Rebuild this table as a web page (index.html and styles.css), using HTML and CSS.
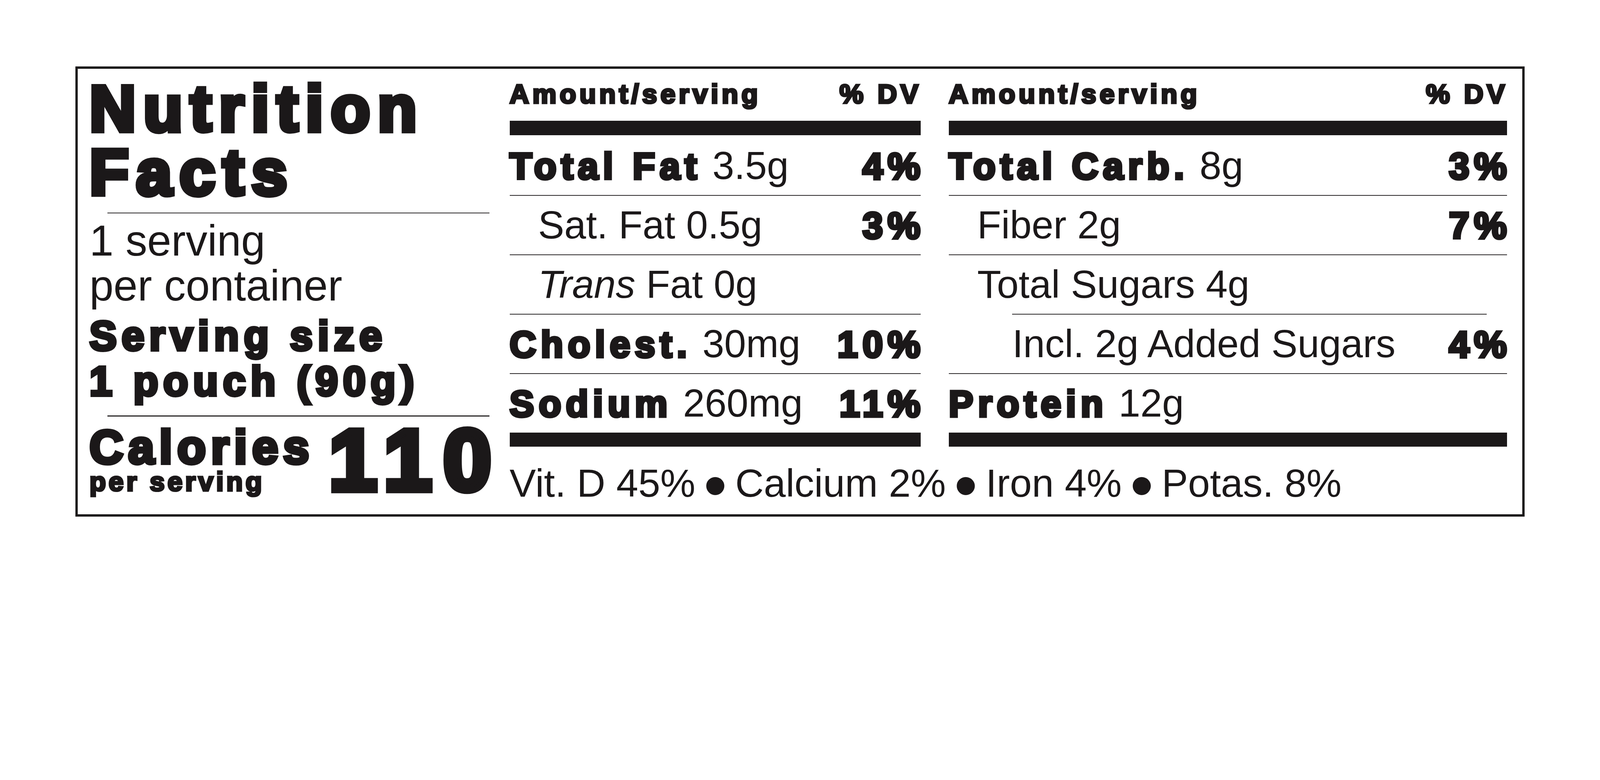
FILE: index.html
```html
<!DOCTYPE html>
<html lang="en">
<head>
<meta charset="utf-8">
<title>Nutrition Facts</title>
<link rel="stylesheet" href="styles.css">
</head>
<body>
<div class="label">
  <section class="left">
    <h1 class="title hv">Nutrition<br>Facts</h1>
    <div class="rule rule-top"></div>
    <p class="servings">1 serving<br>per container</p>
    <p class="size hv">Serving size<br>1 pouch (90g)</p>
    <div class="rule rule-bottom"></div>
    <div class="cal">
      <div class="cal-text">
        <div class="cal-word hv">Calories</div>
        <div class="cal-per hv">per serving</div>
      </div>
      <div class="cal-num hv">110</div>
    </div>
  </section>
  <section class="main">
    <div class="cols">
      <div class="col col-mid">
        <div class="head"><span class="hv">Amount/serving</span><span class="hv head-dv">% DV</span></div>
        <div class="bar bar-top"></div>
        <div class="row"><span><b class="hv">Total Fat</b> 3.5g</span><span class="hv pct">4%</span></div>
        <div class="sep"></div>
        <div class="row ind1"><span>Sat. Fat 0.5g</span><span class="hv pct">3%</span></div>
        <div class="sep"></div>
        <div class="row ind1"><span><i class="it">Trans</i> Fat 0g</span></div>
        <div class="sep"></div>
        <div class="row"><span><b class="hv">Cholest.</b> 30mg</span><span class="hv pct">10%</span></div>
        <div class="sep"></div>
        <div class="row"><span><b class="hv">Sodium</b> 260mg</span><span class="hv pct">11%</span></div>
        <div class="bar"></div>
      </div>
      <div class="col col-right">
        <div class="head"><span class="hv">Amount/serving</span><span class="hv head-dv">% DV</span></div>
        <div class="bar bar-top"></div>
        <div class="row"><span><b class="hv">Total Carb.</b> 8g</span><span class="hv pct">3%</span></div>
        <div class="sep"></div>
        <div class="row ind1"><span>Fiber 2g</span><span class="hv pct">7%</span></div>
        <div class="sep"></div>
        <div class="row ind1"><span>Total Sugars 4g</span></div>
        <div class="sep sep-short"></div>
        <div class="row ind2"><span>Incl. 2g Added Sugars</span><span class="hv pct">4%</span></div>
        <div class="sep"></div>
        <div class="row"><span><b class="hv">Protein</b> 12g</span></div>
        <div class="bar"></div>
      </div>
    </div>
    <p class="footer">Vit. D 45% <span class="dot">•</span> Calcium 2% <span class="dot">•</span> Iron 4% <span class="dot">•</span> Potas. 8%</p>
  </section>
</div>
</body>
</html>
```
FILE: styles.css
```css
:root {
  /* one reference pixel of the 5392px-wide artwork */
  --u: calc(100vw / 5392);
  --ink: #1b1819;
  --rule: #2b2829;
}

* {
  box-sizing: border-box;
}

html,
body {
  margin: 0;
  padding: 0;
  background: #ffffff;
  overflow: hidden;
}

body {
  font-family: "Liberation Sans", Arial, sans-serif;
  color: var(--ink);
  padding-top: calc(224 * var(--u));
}

.label {
  width: calc(4885 * var(--u));
  height: calc(1516 * var(--u));
  margin: 0 auto;
  border: calc(8 * var(--u)) solid var(--ink);
  display: flex;
  padding: 0 calc(52 * var(--u)) 0 calc(40 * var(--u));
}

.left {
  width: calc(1348 * var(--u));
  flex: none;
}

.main {
  flex: 1;
  margin-left: calc(68 * var(--u));
}

.hv {
  font-weight: 700;
  -webkit-text-stroke: 0.075em var(--ink);
  letter-spacing: 0.12em;
}

.it {
  font-style: italic;
}

/* left column */
.title {
  margin: 0;
  padding-top: calc(27 * var(--u));
  font-size: calc(217 * var(--u));
  line-height: calc(215 * var(--u));
  letter-spacing: 0.115em;
}

.rule {
  height: calc(3 * var(--u));
  background: var(--rule);
  margin-left: calc(61 * var(--u));
}

.rule-top {
  margin-top: calc(27 * var(--u));
}

.servings {
  margin: calc(17 * var(--u)) 0 0;
  font-size: calc(146 * var(--u));
  line-height: calc(152 * var(--u));
}

.size {
  margin: calc(16 * var(--u)) 0 0;
  font-size: calc(138 * var(--u));
  line-height: calc(153 * var(--u));
  letter-spacing: 0.119em;
}

.rule-bottom {
  margin-top: calc(38 * var(--u));
}

.cal {
  display: flex;
  justify-content: space-between;
  align-items: flex-start;
  margin-top: calc(30 * var(--u));
}

.cal-word {
  font-size: calc(158 * var(--u));
  line-height: calc(150 * var(--u));
  letter-spacing: 0.106em;
}

.cal-per {
  font-size: calc(91 * var(--u));
  line-height: calc(80 * var(--u));
  letter-spacing: 0.1em;
}

.cal-num {
  font-size: calc(291 * var(--u));
  line-height: calc(236 * var(--u));
  letter-spacing: 0.133em;
  margin-right: calc(-45 * var(--u));
}

/* nutrient columns */
.cols {
  display: flex;
  gap: calc(95 * var(--u));
}

.col-mid {
  width: calc(1385 * var(--u));
  flex: none;
}

.col-right {
  flex: 1;
}

.head {
  display: flex;
  justify-content: space-between;
  font-size: calc(91 * var(--u));
  line-height: calc(100 * var(--u));
  padding-top: calc(35 * var(--u));
}

.head .hv {
  letter-spacing: 0.122em;
}

.head-dv {
  margin-right: -0.04em;
}

.bar {
  height: calc(48 * var(--u));
  background: var(--ink);
}

.bar-top {
  margin-top: calc(40 * var(--u));
  margin-bottom: calc(5 * var(--u));
}

.row {
  display: flex;
  justify-content: space-between;
  align-items: baseline;
  height: calc(197 * var(--u));
  padding-top: calc(29 * var(--u));
  font-size: calc(132 * var(--u));
  line-height: calc(137 * var(--u));
}

.row .hv {
  font-size: calc(124 * var(--u));
  letter-spacing: 0.125em;
}

.row .pct {
  margin-right: -0.117em;
}

.ind1 {
  padding-left: calc(96 * var(--u));
}

.ind2 {
  padding-left: calc(214 * var(--u));
}

.sep {
  height: calc(3 * var(--u));
  background: var(--rule);
}

.sep-short {
  margin-left: calc(213 * var(--u));
  margin-right: calc(69 * var(--u));
}

.footer {
  margin: calc(56 * var(--u)) 0 0;
  font-size: calc(133 * var(--u));
  line-height: calc(133 * var(--u));
}

.dot {
  font-size: calc(225 * var(--u));
  line-height: 0;
  vertical-align: calc(-39 * var(--u));
  margin: 0 calc(-9 * var(--u));
}
```
